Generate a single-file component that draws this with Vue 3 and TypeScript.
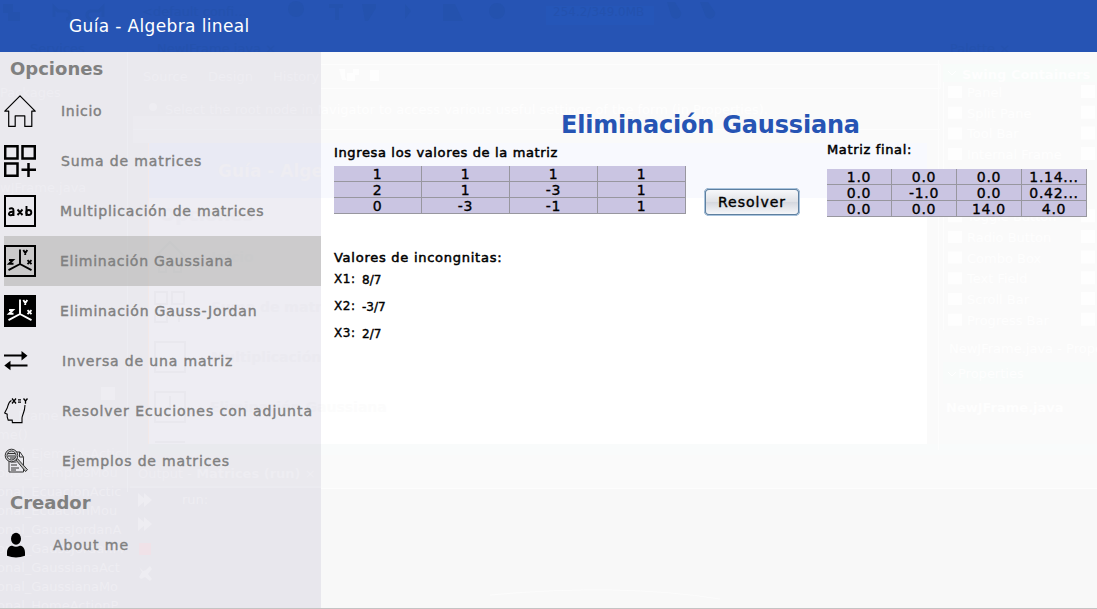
<script setup lang="ts">
interface Item { icon: string; label: string; pad: number; spacing: number; active?: boolean }

const items: Item[] = [
  { icon: 'home', label: 'Inicio', pad: 61, spacing: 0.7 },
  { icon: 'sum', label: 'Suma de matrices', pad: 61, spacing: 0.87 },
  { icon: 'mult', label: 'Multiplicación de matrices', pad: 60, spacing: 0.8 },
  { icon: 'axes', label: 'Eliminación Gaussiana', pad: 60, spacing: 0.74, active: true },
  { icon: 'axesDark', label: 'Eliminación Gauss-Jordan', pad: 60, spacing: 0.79 },
  { icon: 'swap', label: 'Inversa de una matriz', pad: 62, spacing: 0.85 },
  { icon: 'head', label: 'Resolver Ecuciones con adjunta', pad: 62, spacing: 0.96 },
  { icon: 'search', label: 'Ejemplos de matrices', pad: 62, spacing: 0.84 },
]
const matrix = [['1', '1', '1', '1'], ['2', '1', '-3', '1'], ['0', '-3', '-1', '1']]
const result = [['1.0', '0.0', '0.0', '1.14...'], ['0.0', '-1.0', '0.0', '0.42...'], ['0.0', '0.0', '14.0', '4.0']]
const values = [['X1:', '8/7'], ['X2:', '-3/7'], ['X3:', '2/7']]
const palette = ['Panel', 'Split Pane', 'Tool Bar', 'Internal Frame', '', '', 'Toggle Button', 'Radio Button', 'Combo Box', 'Text Field', 'Scroll Bar', 'Progress Bar']
const members = ['Frame', 'me()', 'onal_EjemplosActic', 'onal_EjemplosMou', 'onal_EcuacionActic', 'onal_EcuacionMou', 'onal_GaussJordanA', 'onal_GaussJordanM', 'onal_GaussianaAct', 'onal_GaussianaMo', 'onal_HomeActionP']
</script>

<template>
  <div class="app">
    <svg class="ghost" width="1097" height="609" viewBox="0 0 1097 609" aria-hidden="true">
      <rect x="149" y="143" width="778" height="301" fill="#fff" />
      <rect x="149" y="143" width="778" height="55" fill="#f8f9fe" />
      <rect x="321" y="444" width="776" height="44" fill="#f9fbfb" />
      <rect x="321" y="455" width="776" height="33" fill="#fafafa" />
      <rect x="321" y="488" width="776" height="120" fill="#f8f8f8" />
      <rect x="943" y="64" width="154" height="18" fill="#f8fcfa" />
      <rect x="943" y="362" width="154" height="22" fill="#f8fbfa" />
      <path d="M321 64.500h619v24h-619M321 129.500h619M321 488.500h776M938.500 60v390M943.500 82v248" fill="none" stroke="#fdfdfd" />
      <path d="M490 595q130-12 230 4" fill="none" stroke="#fcfcfc" />
      <g fill="#fefefe" font-size="13">
        <text x="321" y="114">avigator to access various useful settings of the form (in Properties).</text>
        <text x="962" y="79" font-weight="bold">Swing Containers</text>
        <path d="M948 71l4 4 4-4M948 372l4 4 4-4" fill="none" stroke="#fff" />
        <g v-for="(name, i) in palette" :key="i">
          <template v-if="name">
            <rect x="948" :y="86 + i * 20.700" width="14" height="12" />
            <text x="967" :y="97 + i * 20.700">{{ name }}</text>
            <rect x="1081" :y="85 + i * 20.700" width="14" height="13" />
          </template>
        </g>
        <text x="949" y="353">NewJFrame.java - Prope</text>
        <text x="958" y="378">Properties</text>
        <text x="946" y="412" font-weight="bold">NewJFrame.java</text>
        <path d="M339 69h6v8l2 3h-5zM347 73h8v8h-8zM353 69h6v6h-6zM370 70h9v11h-9zM395 71h0" />
      </g>
      <text x="210" y="412" fill="#fcfcfc" font-size="14" font-weight="bold">Eliminación Gaussiana</text>
    </svg>

    <header class="topbar">
      <svg class="topghost" width="1097" height="52" aria-hidden="true">
        <g fill="#2452ae" font-size="13">
          <path d="M3 4h10v8h7v9H8v-8H3zM329 4h14v4h-4v12h-4V8h-6zM362 4h14v4l-8 13h-3zM405 4l6 7-6 8zM443 4h12l8 17h-20zM497 3a8 8 0 110 16 8 8 0 010-16M667 2h8l6 10a5 5 0 11-10 3zM700 2h8l7 10a5 5 0 11-10 3z" />
          <circle cx="296" cy="9" r="8" />
          <path d="M54 17V7l4 4h8a4 4 0 010 8M103 17V7l-4 4h-8a4 4 0 000 8" fill="none" stroke="#2452ae" stroke-width="3" />
          <text x="142" y="16">&lt;default confi...</text>
          <rect x="546" y="6" width="108" height="19" fill="#2556b8" />
          <text x="553" y="16" font-size="12">254.2/349.0MB</text>
          <text x="30" y="53">Services</text><text x="157" y="53">NewJFrame.java ×</text>
          <text x="950" y="53">Palette ×</text>
        </g>
      </svg>
      <h1>Guía - Algebra lineal</h1>
    </header>

    <div class="body">
      <aside class="side">
        <svg class="sideghost" width="321" height="556" viewBox="0 52 321 556" aria-hidden="true">
          <rect x="149" y="143" width="172" height="301" fill="#eeedf3" />
          <rect x="149" y="143" width="172" height="55" fill="#e9eaf4" />
          <rect x="133" y="116" width="188" height="27" fill="#ecebf0" />
          <rect x="149" y="444" width="172" height="11" fill="#e9eaee" />
          <rect x="0" y="488" width="321" height="120" fill="#e8e7ed" />
          <path d="M127.500 52v440M133 129.500h188M130 487h191" fill="none" stroke="#ededf2" />
          <path d="M148.500 143v301" stroke="#f2e9e8" />
          <g fill="#eeedf2" font-size="13">
            <text x="0" y="97">Packages</text><text x="143" y="81">Source</text><text x="208" y="81">Design</text><text x="273" y="81">History</text>
            <circle cx="153" cy="107" r="4" /><text x="165" y="114">Select the root node in Na</text>
            <text x="0" y="192">wJFrame.java</text>
            <text x="138" y="478">Output - <tspan font-weight="bold">Matrices (run)</tspan> ×</text>
            <text x="182" y="504">run:</text>
            <path d="M138 493l8 7-8 7zM144 493l8 7-8 7zM138 517l8 7-8 7zM144 517l8 7-8 7z" />
            <rect x="101" y="387" width="14" height="13" />
            <path d="M139 567l4 4 3-1 4-4 2 3-4 5 4 5-2 2-5-4-4 2-2-2 3-5z" />
            <text v-for="(m, i) in members" :key="m" :x="i === 0 ? 18 : -3" :y="420 + i * 19">{{ m }}</text>
            <text x="218" y="177" font-size="17" font-weight="bold">Guía - Algebra lineal</text>
          </g>
          <rect x="139" y="543" width="12" height="12" fill="#f0e2e8" />
          <g fill="none" stroke="#e9e8ee" stroke-width="2">
            <path d="M155 257l15-15 15 15M159 256v16h7v-10h8v10h7v-16M155 292h12v12h-12zM172 292h12v12h-12zM155 310h12v12h-12zM179 310v12M173 316h12M155 342h30v30h-30zM155 392h30v30h-30zM170 396v13M155 442h30" />
          </g>
          <g fill="#ebeaf0" font-size="14" font-weight="bold">
            <text x="160" y="221" font-size="18">Opciones</text><text x="211" y="262">Inicio</text><text x="211" y="312">Suma de matrices</text><text x="211" y="362">Multiplicación de matrices</text><text x="210" y="412">Eliminación Gaussiana</text>
          </g>
        </svg>
        <h2>Opciones</h2>
        <nav>
          <div v-for="item in items" :key="item.label" class="item" :class="{ active: item.active }">
            <span class="icon" :style="{ width: item.pad - 4 + 'px' }">
              <svg v-if="item.icon === 'home'" width="32" height="32" viewBox="0 0 32 32"><path d="M.8 16.200L16 .8l15.200 15.400h-3.400v15.200h-7V20.800h-9.600v10.600H4.700V16.200z" fill="none" stroke="#000" stroke-width="1.200" stroke-linejoin="round" /></svg>
              <svg v-else-if="item.icon === 'sum'" width="32" height="32" viewBox="0 0 32 32"><path d="M1.200 1.200h12.300v12.300H1.200zM18.500 1.200h12.300v12.300H18.500zM1.200 18.500h12.300v12.300H1.200zM24.500 18v14M17.500 24.700h14.500" fill="none" stroke="#000" stroke-width="2.500" /></svg>
              <svg v-else-if="item.icon === 'mult'" width="32" height="32" viewBox="0 0 32 32"><rect x="1" y="1" width="30" height="30" fill="none" stroke="#000" stroke-width="2" /><g fill="none" stroke="#000" stroke-width="1.900"><path d="M5 13.800q4.500-1.600 4.500 1.800v5.400M9.300 16.800c-5-.6-5.500 3.500-2.700 3.500 2 0 2.700-1.700 2.700-2.200M13.500 14.500l5 5.500M18.500 14.500l-5 5.500M22.500 11v10" /><circle cx="24.800" cy="17.500" r="2.500" /></g></svg>
              <svg v-else-if="item.icon === 'axes' || item.icon === 'axesDark'" width="32" height="32" viewBox="0 0 32 32" :class="item.icon"><rect class="frame" x="1" y="1" width="30" height="30" stroke-width="2" /><g class="lines" fill="none" stroke-width="1.900"><path d="M16 4.500v14.500L4.500 25.200M16 19l11.500 6.200" /><path stroke-width="1.900" d="M19.300 5l2 3 2-3M21.200 7.500v2.500M5 15h4l-4 3.800h4.500M23.500 15.200l4 4M27.500 15.200l-4 4" /></g></svg>
              <svg v-else-if="item.icon === 'swap'" width="25" height="32" viewBox="0 0 25 32"><path d="M0 10.500h18M6 20.500h17.500" stroke="#000" stroke-width="1.900" /><path d="M17.500 6v9.500l6-4.800zM6.500 15.700v9.500L.3 20.500z" /></svg>
              <svg v-else-if="item.icon === 'head'" width="25" height="32" viewBox="0 0 25 32"><g fill="none" stroke="#000" stroke-width="1.100"><path d="M7.500 5.500C4 7 4.200 11 3.200 13L.6 18l2.600 1.200v2.600l1 3.300h4l.2 2.500H18v-4.500c0-3 3-6 3-13" /><path stroke-width="1.300" d="M8 3.500l4 5M12 3.500l-4 5M14 4.800h3M14 7.200h3M19.500 3.500l2 2.500 2-2.500M21.500 6v2.800" /></g></svg>
              <svg v-else width="25" height="32" viewBox="0 0 25 32"><g fill="none" stroke="#333" stroke-width="1"><path d="M5 14v13h14.500V12.200L16 7h-5M15.500 7v5h4" /><path d="M6.500 17h6M7 20h6M7 23h8M7 25h5" /><circle cx="7.500" cy="10.500" r="6.300" fill="#d6d6da" /><circle cx="7.500" cy="10.500" r="4.500" /><path d="M4 8.500h7M4 11h7M6 13h5" /><path d="M12 15l9.500 11.500 2-1.800-10-11z" fill="#bbb" /></g></svg>
            </span>
            <span class="label" :style="{ letterSpacing: item.spacing + 'px' }">{{ item.label }}</span>
          </div>
        </nav>
        <h2>Creador</h2>
        <div class="item about">
          <span class="icon"><svg width="24" height="26" viewBox="0 0 24 26"><ellipse cx="12" cy="6.800" rx="5" ry="6" /><path d="M3 20.500c0-5 3-6.800 5.300-6.800 2.300 1.500 5.100 1.500 7.400 0 2.300 0 5.300 1.800 5.300 6.800v3.200q-9 3.500-18 0z" /></svg></span>
          <span class="label">About me</span>
        </div>
      </aside>

      <main class="main">
        <h2 class="title">Eliminación Gaussiana</h2>
        <div class="work">
          <section class="input">
            <h3>Ingresa los valores de la matriz</h3>
            <div class="grid left"><template v-for="(row, i) in matrix" :key="i"><span v-for="(cell, j) in row" :key="j">{{ cell }}</span></template></div>
          </section>
          <button type="button">Resolver</button>
          <section class="output">
            <h3>Matriz final:</h3>
            <div class="grid right"><template v-for="(row, i) in result" :key="i"><span v-for="(cell, j) in row" :key="j">{{ cell }}</span></template></div>
          </section>
        </div>
        <section class="answers">
          <h3>Valores de incongnitas:</h3>
          <dl><div v-for="[name, value] in values" :key="name"><dt>{{ name }}</dt><dd>{{ value }}</dd></div></dl>
        </section>
      </main>
    </div>
  </div>
</template>

<style>
body { overflow: hidden; }
</style>

<style scoped>
* { box-sizing: border-box; margin: 0; padding: 0; }
.app { position: relative; width: 1097px; height: 609px; background: #fafafa; border-bottom: 1px solid #c4c4c4; font-family: "DejaVu Sans", sans-serif; overflow: hidden; color: #000; }
svg { display: block; }
.ghost, .topghost, .sideghost { position: absolute; left: 0; top: 0; }
.topbar { position: relative; height: 52px; background: #2654b4; display: flex; align-items: center; padding-left: 69px; }
.topbar h1 { position: relative; color: #fff; font-weight: 400; font-size: 17px; line-height: 20px; letter-spacing: .36px; }
.body { position: relative; display: flex; height: 556px; }
.side { position: relative; width: 321px; height: 556px; background: #eae9ee; overflow: hidden; color: #808080; }
.side > h2, .side > nav, .side > .item { position: relative; }
.side h2 { height: 34px; padding-left: 10px; font-size: 18px; line-height: 33px; font-weight: 700; }
.item { height: 50px; margin-left: 4px; display: flex; align-items: center; }
.item.active { background: rgba(170, 170, 165, .5); }
.icon { flex: none; }
.label { font-size: 14px; line-height: 20px; white-space: nowrap; -webkit-text-stroke: .4px #808080; }
.about .icon { width: 49px; }
.about .label { letter-spacing: 1px; }
.axes .frame { fill: none; stroke: #000; }
.axes .lines { stroke: #000; }
.axesDark .frame { fill: #000; stroke: #000; }
.axesDark .lines { stroke: #fff; }
.main { flex: 1; padding: 58px 10px 0 13px; }
.title { height: 30px; padding-left: 227px; font-size: 24px; line-height: 30px; letter-spacing: -.2px; color: #2654b4; white-space: nowrap; }
.work { display: flex; height: 77px; }
.input { width: 352px; padding-top: 4px; }
h3 { height: 16px; font-weight: 400; font-size: 13px; line-height: 18px; letter-spacing: .64px; white-space: nowrap; -webkit-text-stroke: .5px #000; }
.grid { display: grid; font-size: 14px; line-height: 17px; text-align: center; -webkit-text-stroke: .35px #000; letter-spacing: .7px; }
.grid span { height: 16px; border-right: 1px solid #98979f; border-bottom: 1px solid #98979f; background: rgba(198, 192, 224, .92); }
.left { grid-template-columns: repeat(4, 88px); margin-top: 6px; }
.right { grid-template-columns: repeat(4, 65px); margin-top: 12px; }
button { width: 96px; height: 28px; margin: 48px 0 0 18px; flex: none; border: 2px solid #5e7f9f; outline: 1px solid #a9c4de; outline-offset: -1px; border-radius: 5px; background: linear-gradient(#f7f8fa, #dfe1e6 50%, #d5d8df 51%, #f5f6f9); font: 14px/20px "DejaVu Sans", sans-serif; letter-spacing: 1px; -webkit-text-stroke: .4px #000; color: #000; }
.output { width: 260px; margin-left: 27px; padding-top: 1px; }
.answers { padding-top: 32px; }
.answers h3 { letter-spacing: .74px; }
dl { padding-top: 5px; font-size: 12px; }
dl div { display: flex; height: 27px; line-height: 18px; -webkit-text-stroke: .4px #000; }
dt { width: 28px; letter-spacing: .6px; }
dd { padding-top: 1px; }
</style>
